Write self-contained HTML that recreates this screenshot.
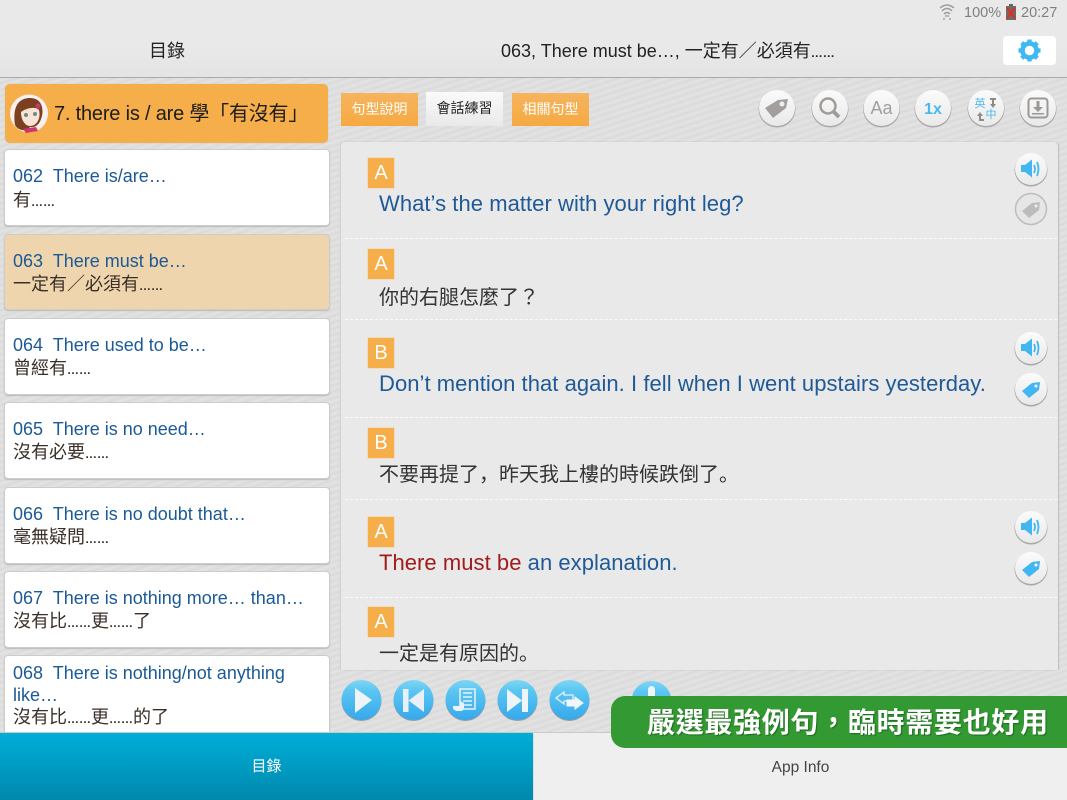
<!DOCTYPE html>
<html><head><meta charset="utf-8"><style>
html,body{margin:0;padding:0;overflow:hidden;height:800px}
body{width:1067px;height:800px;overflow:hidden;position:relative;background:#dedede;font-family:"Liberation Sans","Noto Sans CJK SC",sans-serif}
.t{position:absolute;white-space:nowrap}
.e{font-size:12px;font-weight:bold}
.card{position:absolute;left:4px;width:324px;background:#fff;border:1px solid #ccc;border-radius:4px;box-shadow:0 1px 1px #bbb}
.en{position:absolute;left:8px;font-size:18px;color:#1b5a96;white-space:nowrap;line-height:22px}
.zh{position:absolute;left:8px;font-size:18px;color:#3a2f28;white-space:nowrap;line-height:22px}
.bd{position:absolute;left:368px;width:26px;height:30px;background:#f6ae4a;color:#fff;font-size:20px;line-height:30px;text-align:center;box-shadow:0 0 0 .5px #f8cf95}
.s{position:absolute;left:379px;font-size:22px;letter-spacing:.05px;color:#1f5a96;white-space:nowrap;line-height:28px}
.c{position:absolute;left:379px;font-size:20px;color:#333;white-space:nowrap;line-height:28px}
.dash{position:absolute;left:345px;width:712px;border-top:1px dashed #fbfbfb}
.tab{position:absolute;top:93px;height:33px;width:77px;text-align:center;line-height:33px;font-size:14px;color:#fff;background:linear-gradient(#f5b45e,#f6a941)}
</style></head><body>
<svg style="position:absolute;left:0;top:0" width="1067" height="800">
<defs>
<pattern id="tx" width="6" height="6" patternUnits="userSpaceOnUse" patternTransform="rotate(-18)"><rect width="6" height="6" fill="#dfdfdf"/><path d="M0 1.5H6" stroke="#d9d9d9" stroke-width="1"/><path d="M0 4.5H6" stroke="#e4e4e4" stroke-width="1"/></pattern>
<linearGradient id="bl" x1="0" y1="0" x2="0" y2="1"><stop offset="0" stop-color="#7fd6f5"/><stop offset=".25" stop-color="#5cc7f2"/><stop offset="1" stop-color="#36a9ec"/></linearGradient>
<linearGradient id="wh" x1="0" y1="0" x2="0" y2="1"><stop offset="0" stop-color="#fbfbfb"/><stop offset="1" stop-color="#e9e9e9"/></linearGradient>
<g id="cw"><circle cy="1" r="18.500" fill="#a8a8a8"/><circle r="18" fill="url(#wh)"/></g>
<g id="cs"><circle cy="1" r="16.500" fill="#a8a8a8"/><circle r="16" fill="url(#wh)"/></g>
<g id="cb"><circle cy="1" r="20" fill="#9a9a9a"/><circle r="20" fill="url(#bl)"/></g>
</defs>
<rect width="1067" height="800" fill="url(#tx)"/>
</svg>
<div style="position:absolute;left:0;top:0;width:1067px;height:78px;background:linear-gradient(#e9e9e9 0,#e9e9e9 60%,#e4e4e4 100%);border-bottom:1px solid #aaa;box-sizing:border-box"></div>
<div class="t" style="left:964px;top:5px;font-size:14.5px;color:#7f7f7f;line-height:17px">100%</div>
<div class="t" style="left:1021px;top:5px;font-size:14.5px;color:#7f7f7f;line-height:17px">20:27</div>
<div class="t" style="left:149px;top:40px;font-size:18px;color:#222;line-height:22px">目錄</div>
<div class="t" style="left:501px;top:40px;font-size:18px;color:#222;line-height:22px">063, There must be…, 一定有／必須有<span class="e">……</span></div>
<div style="position:absolute;left:1003px;top:36px;width:53px;height:29px;background:#fff;border-radius:4px"></div>

<div style="position:absolute;left:5px;top:84px;width:323px;height:59px;background:#f6ae4a;border-radius:5px;box-shadow:0 0 1px #bbb"></div>
<div class="t" style="left:54px;top:101px;font-size:20px;color:#1c1c1c;line-height:26px;letter-spacing:-.2px">7. there is / are 學「有沒有」</div>

<div class="card" style="top:149px;height:75px"><div class="en" style="top:15px">062&nbsp; There is/are…</div><div class="zh" style="top:39px">有<span class="e">……</span></div></div>
<div class="card" style="top:234px;height:74px;background:#efd5ae"><div class="en" style="top:15px">063&nbsp; There must be…</div><div class="zh" style="top:38px">一定有／必須有<span class="e">……</span></div></div>
<div class="card" style="top:318px;height:75px"><div class="en" style="top:15px">064&nbsp; There used to be…</div><div class="zh" style="top:38px">曾經有<span class="e">……</span></div></div>
<div class="card" style="top:402px;height:75px"><div class="en" style="top:15px">065&nbsp; There is no need…</div><div class="zh" style="top:38px">沒有必要<span class="e">……</span></div></div>
<div class="card" style="top:487px;height:75px"><div class="en" style="top:15px">066&nbsp; There is no doubt that…</div><div class="zh" style="top:38px">毫無疑問<span class="e">……</span></div></div>
<div class="card" style="top:571px;height:75px"><div class="en" style="top:15px">067&nbsp; There is nothing more… than…</div><div class="zh" style="top:38px">沒有比<span class="e">……</span>更<span class="e">……</span>了</div></div>
<div class="card" style="top:655px;height:80px"><div class="en" style="top:6px">068&nbsp; There is nothing/not anything</div><div class="en" style="top:28px">like…</div><div class="zh" style="top:50px">沒有比<span class="e">……</span>更<span class="e">……</span>的了</div></div>

<div class="tab" style="left:341px">句型說明</div>
<div class="tab" style="left:426px;color:#222;background:linear-gradient(#fafafa,#e9e9e9);height:34px;top:92px">會話練習</div>
<div class="tab" style="left:512px">相關句型</div>

<div style="position:absolute;left:341px;top:142px;width:717px;height:528px;background:#e9e9e9;border-radius:4px 4px 0 0;box-shadow:1px 0 1px #bbb,-1px 0 1px #d0d0d0"></div>
<div class="dash" style="top:238px"></div><div class="dash" style="top:319px"></div><div class="dash" style="top:417px"></div><div class="dash" style="top:499px"></div><div class="dash" style="top:597px"></div>

<div class="bd" style="top:158px">A</div><div class="s" style="top:190px">What’s the matter with your right leg?</div>
<div class="bd" style="top:249px">A</div><div class="c" style="top:282px">你的右腿怎麼了<span style="font-family:'Noto Sans CJK TC',sans-serif">？</span></div>
<div class="bd" style="top:338px">B</div><div class="s" style="top:370px">Don’t mention that again. I fell when I went upstairs yesterday.</div>
<div class="bd" style="top:428px">B</div><div class="c" style="top:461px">不要再提了，昨天我上樓的時候跌倒了。</div>
<div class="bd" style="top:517px">A</div><div class="s" style="top:549px"><span style="color:#a01c1c">There must be</span> an explanation.</div>
<div class="bd" style="top:607px">A</div><div class="c" style="top:640px">一定是有原因的。</div>

<svg style="position:absolute;left:0;top:0" width="1067" height="800">
<!-- avatar -->
<circle cx="29" cy="113.500" r="19" fill="#f8f0f0"/>
<path d="M15 125 C12 105 20 98 30 98 C40 98 44 106 42 116 C40 124 36 128 30 127 L27 130 C22 131 17 129 15 125Z" fill="#7b4022"/>
<path d="M21 112 C26 108 36 106 39 110 C41 118 37 126 30 126 C25 126 21 120 21 112Z" fill="#f6e4d6"/>
<path d="M23 129 L36 127 L38 131 L26 133Z" fill="#c9386a"/>
<circle cx="38" cy="106" r="2.500" fill="#c9386a"/>
<circle cx="26" cy="115" r="2" fill="#6e8c80"/><circle cx="35" cy="114" r="2" fill="#6e8c80"/>
<!-- status wifi -->
<g fill="none" stroke="#9c9c9c" stroke-width="1.400"><path d="M940 8 Q947 2 954 8"/><path d="M942 11 Q947 6 952 11"/><path d="M944 14 Q947 11 950 14"/></g>
<path d="M945 15h4v2h-4z M943 18h2v2h-2z M949 18h2v2h-2z" fill="#b5b5b5"/>
<!-- battery -->
<rect x="1009" y="4" width="4" height="2" fill="#666"/><rect x="1006" y="6" width="10" height="14" fill="#6b6b6b"/>
<path d="M1007 8 L1015 18 M1015 8 L1007 18" stroke="#e82a1e" stroke-width="2"/>
<!-- gear -->
<g transform="translate(1029.500,50.500)"><circle r="7" fill="none" stroke="#3fb9f3" stroke-width="4.600"/><g fill="#3fb9f3"><rect x="-2.200" y="-11" width="4.400" height="5"/><rect x="-2.200" y="6" width="4.400" height="5"/><rect x="-11" y="-2.200" width="5" height="4.400"/><rect x="6" y="-2.200" width="5" height="4.400"/><rect x="-2.200" y="-11" width="4.400" height="5" transform="rotate(45)"/><rect x="-2.200" y="-11" width="4.400" height="5" transform="rotate(135)"/><rect x="-2.200" y="-11" width="4.400" height="5" transform="rotate(225)"/><rect x="-2.200" y="-11" width="4.400" height="5" transform="rotate(315)"/></g></g>
<!-- toolbar -->
<use href="#cw" x="777" y="108"/><g transform="translate(777,108)" fill="#a39f9c"><path d="M-12 0 L1 -8 L11 -9 L9 0 L-4 10Z"/><circle cx="5" cy="-4" r="2.500" fill="#f0f0f0"/></g>
<use href="#cw" x="830" y="108"/><g fill="none" stroke="#a09c98"><circle cx="828" cy="106" r="7.500" stroke-width="2.500"/><path d="M834 112 L839 117" stroke-width="4"/></g>
<use href="#cw" x="881.500" y="108"/><text x="881.500" y="114" font-family="Liberation Sans" font-size="18" fill="#a39f9c" text-anchor="middle">Aa</text>
<use href="#cw" x="933" y="108"/><text x="933" y="114" font-family="Liberation Sans" font-size="16" font-weight="bold" fill="#49b8ee" text-anchor="middle">1x</text>
<use href="#cw" x="986" y="108"/><text x="980" y="107" font-family="Noto Sans CJK TC" font-size="11" fill="#49b8ee" text-anchor="middle">英</text><text x="991" y="118" font-family="Noto Sans CJK TC" font-size="11" fill="#49b8ee" text-anchor="middle">中</text>
<path d="M990 98h6v2h-2v4h2l-3 4-3-4h2v-4h-2z M979 121v-5h-2l3-4 3 4h-2v3h3v2z" fill="#8f8c88"/>
<use href="#cw" x="1038" y="108"/><rect x="1028.500" y="98.500" width="19" height="19" rx="3" fill="none" stroke="#9c9995" stroke-width="2"/><path d="M1036.500 101h3v6h3.500l-5 5-5-5h3.500z M1032 113h12v1.500h-12z" fill="#9c9995"/>
<!-- small buttons -->
<g id="spk"><use href="#cs" x="1031" y="169"/><path d="M1021 165h4l7-5.500v18l-7-5.500h-4z" fill="#42b6f0"/><path d="M1034 165q2 4 0 8M1037 162q3 7 0 14" fill="none" stroke="#42b6f0" stroke-width="1.800"/></g>
<g><circle cx="1031" cy="209" r="15.500" fill="#e6e6e6" stroke="#bdbdbd" stroke-width="1.500"/><path d="M1022 211L1032 203L1040 202L1039 210L1029 218Z" fill="#bcbcbc"/><circle cx="1036" cy="206" r="1.500" fill="#eee"/></g>
<use href="#spk" y="179"/>
<g><use href="#cs" x="1031" y="389"/><path d="M1022 391L1032 383L1040 382L1039 390L1029 398Z" fill="#42b6f0"/><circle cx="1036" cy="386" r="1.500" fill="#fff"/></g>
<use href="#spk" y="358"/>
<g><use href="#cs" x="1031" y="568"/><path d="M1022 570L1032 562L1040 561L1039 569L1029 577Z" fill="#42b6f0"/><circle cx="1036" cy="565" r="1.500" fill="#fff"/></g>
<!-- player -->
<use href="#cb" x="361.500" y="700"/><path d="M355 688 L372 700 L355 713Z" fill="#eef4f8"/>
<use href="#cb" x="413.500" y="700"/><path d="M403 689h5.500v23h-5.500z M424 689v23l-15.500-11.500z" fill="#e8f0f5"/>
<use href="#cb" x="465.500" y="700"/><rect x="460" y="689" width="15" height="20" fill="none" stroke="#e8f2f8" stroke-width="1.500"/><path d="M463 693h9M463 697h9M463 701h9M463 705h9" stroke="#e8f2f8" stroke-width="1.500"/><path d="M453 706h7v-5l4 2v5l-1 2-1 1h-6l-3-2z" fill="#e8f2f8"/>
<use href="#cb" x="517.500" y="700"/><path d="M507 689l15 11.500-15 11.500z M522 689h6v23h-6z" fill="#eef4f8"/>
<use href="#cb" x="569.500" y="700"/><path d="M556 698l8-6v3h9v6h-9v3z" fill="none" stroke="#e8f2f8" stroke-width="1.300"/><path d="M583 703l-8-6v3h-8v6h8v3z" fill="#f0f6fa" stroke="#f0f6fa"/>
<use href="#cb" x="651.500" y="701"/><rect x="648" y="686" width="7" height="20" rx="3.500" fill="#eef4f8"/>
</svg>

<!-- bottom nav -->
<div style="position:absolute;left:0;top:732px;width:1067px;height:1px;background:#c9c9c9"></div>
<div style="position:absolute;left:0;top:733px;width:533px;height:67px;background:linear-gradient(#00aed8,#0088ad);text-align:center;line-height:67px;color:#fff;font-size:15px">目錄</div>
<div style="position:absolute;left:534px;top:733px;width:533px;height:67px;background:#efefef;text-align:center;line-height:69px;color:#444;font-size:15.500px">App Info</div>

<div style="position:absolute;left:611px;top:696px;width:456px;height:52px;background:#339933;border-radius:14px 0 0 14px"></div>
<div class="t" style="left:647px;top:705px;font-family:'Liberation Sans','Noto Sans CJK TC',sans-serif;font-size:28px;font-weight:bold;color:#fff;line-height:36px;letter-spacing:.7px;text-shadow:1px 1px 1px #1d6b1d">嚴選最強例句，臨時需要也好用</div>
</body></html>
